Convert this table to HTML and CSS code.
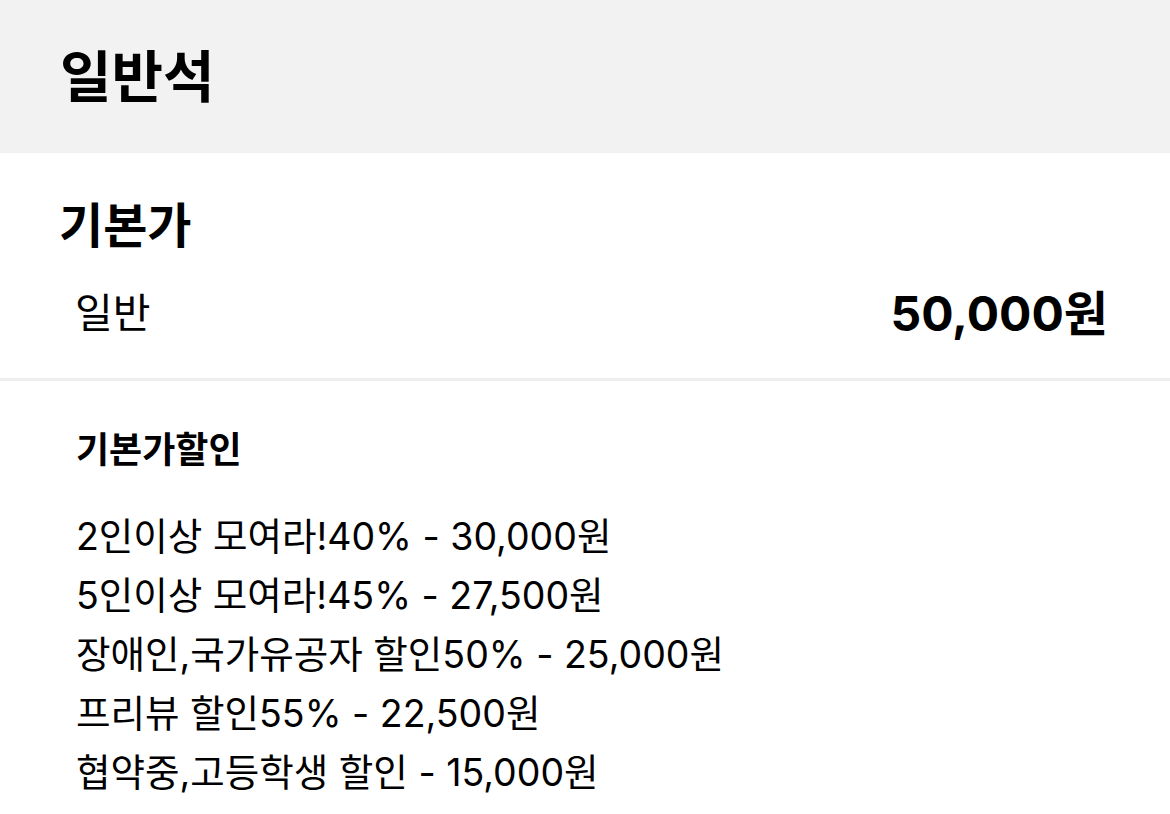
FILE: index.html
```html
<!DOCTYPE html>
<html lang="ko">
<head>
<meta charset="utf-8">
<link rel="stylesheet" href="styles.css">
</head>
<body>
<header class="seat-header">
  <h1 class="seat-title">일반석</h1>
</header>
<section class="base">
  <h2 class="base-title">기본가</h2>
  <div class="price-row">
    <span class="price-label">일반</span>
    <span class="price-value">50,000원</span>
  </div>
</section>
<div class="divider"></div>
<section class="discount">
  <h3 class="discount-title">기본가할인</h3>
  <ul class="discount-list">
    <li>2인이상 모여라!40% - 30,000원</li>
    <li>5인이상 모여라!45% - 27,500원</li>
    <li>장애인,국가유공자 할인50% - 25,000원</li>
    <li>프리뷰 할인55% - 22,500원</li>
    <li>협약중,고등학생 할인 - 15,000원</li>
  </ul>
</section>
</body>
</html>
```
FILE: styles.css
```css
* { box-sizing: border-box; }
body {
  margin: 0;
  background: #fff;
  color: #000;
  font-family: "Inter", "Noto Sans CJK KR", sans-serif;
}
.seat-header {
  height: 153px;
  background: #f2f2f2;
  display: flex;
  align-items: center;
  padding-left: 60px;
}
.seat-title {
  margin: 0;
  font-size: 56px;
  font-weight: 700;
  line-height: 60px;
}
.base {
  padding: 43px 62px 38px 59px;
}
.base-title {
  margin: 0;
  font-size: 48px;
  font-weight: 700;
  line-height: 60px;
}
.price-row {
  margin-top: 24px;
  display: flex;
  justify-content: space-between;
  align-items: center;
  height: 60px;
  padding-left: 16px;
}
.price-label {
  font-size: 41px;
}
.price-value {
  font-size: 48px;
  font-weight: 700;
}
.divider {
  height: 3px;
  background: #eeeeee;
}
.discount {
  padding: 44px 62px 0 76px;
}
.discount-title {
  margin: 0;
  font-size: 36px;
  font-weight: 700;
  line-height: 50px;
}
.discount-list {
  list-style: none;
  margin: 32px 0 0;
  padding: 0;
}
.discount-list li {
  font-size: 37.5px;
  line-height: 59px;
}
```
